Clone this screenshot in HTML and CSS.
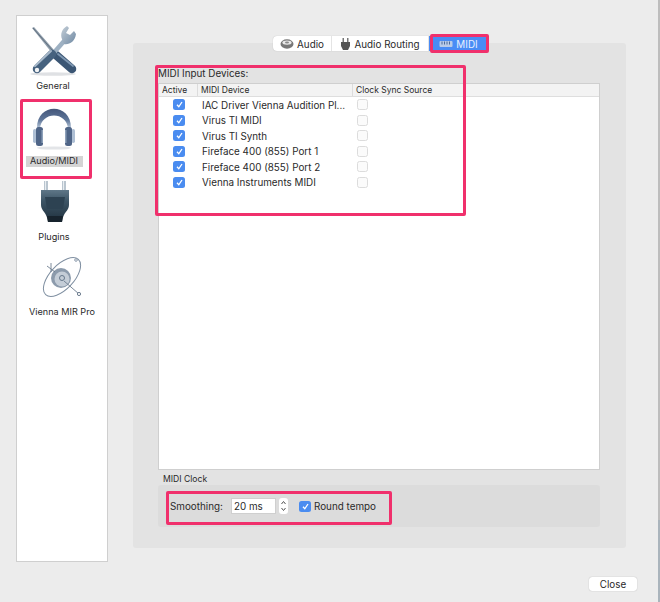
FILE: index.html
```html
<!DOCTYPE html>
<html lang="en">
<head>
<meta charset="utf-8">
<title>Preferences</title>
<link rel="stylesheet" href="styles.css">
</head>
<body>
<div class="window">
  <nav class="sidebar">
    <div class="nav-item nav-general">
      <svg class="nav-icon" width="52" height="52" viewBox="0 0 52 52">
        <defs>
          <linearGradient id="steel" x1="0" y1="0" x2="1" y2="1"><stop offset="0" stop-color="#c4ced7"/><stop offset="1" stop-color="#6f89a3"/></linearGradient>
          <linearGradient id="plug" x1="0" y1="0" x2="0" y2="1"><stop offset="0" stop-color="#5f7788"/><stop offset=".35" stop-color="#3c5465"/><stop offset="1" stop-color="#1f303d"/></linearGradient>
          <linearGradient id="band" x1="0" y1="0" x2="0" y2="1"><stop offset="0" stop-color="#43567a"/><stop offset=".55" stop-color="#5f7699"/><stop offset="1" stop-color="#c0cfe0"/></linearGradient>
        </defs>
        <ellipse cx="26" cy="49" rx="23" ry="1.8" fill="#dfe1e4"/>
        <path d="M5 3 L7 2 L27 25 L25 28Z" fill="#8f9dab"/>
        <path d="M6 3 L26 26" stroke="#4e5d6c" stroke-width=".7"/>
        <path d="M29 30 L45 44" stroke="#3b5674" stroke-width="8.5" stroke-linecap="round"/>
        <path d="M31 29 L46 41" stroke="#7f98b2" stroke-width="1.8" stroke-linecap="round"/>
        <path d="M24 31 L38 15" stroke="#9db0c2" stroke-width="4.5"/>
        <path d="M10 44 L25 29" stroke="#46627f" stroke-width="8.5" stroke-linecap="round"/>
        <path d="M8 41 L24 26" stroke="#a9bacb" stroke-width="2" stroke-linecap="round"/>
        <path d="M40 1 C35 4 33 9 35 14 L37 19 C42 20 48 17 49 9 L47 6 L43 10 L39 8 L42 3Z" fill="url(#steel)"/>
        <circle cx="10" cy="45" r="2.2" fill="#f2f4f6"/>
      </svg>
      <span class="nav-label">General</span>
    </div>
    <div class="nav-item nav-audio">
      <svg class="nav-icon" width="48" height="47" viewBox="0 0 48 47">
        <ellipse cx="24" cy="43" rx="17" ry="1.6" fill="#e3e5e8"/>
        <path d="M7 24 C6 -3 42 -3 41 24 L38 24 C37 6 11 6 10 24Z" fill="url(#band)"/>
        <rect x="3" y="24" width="3.5" height="14" rx="1.7" fill="#aebfd4"/>
        <rect x="41.5" y="24" width="3.5" height="14" rx="1.7" fill="#aebfd4"/>
        <rect x="6" y="22" width="7" height="19" rx="2.5" fill="#4f6587"/>
        <rect x="35" y="22" width="7" height="19" rx="2.5" fill="#4f6587"/>
        <rect x="11.5" y="25" width="1.5" height="13" fill="#8ea1ba"/>
        <rect x="35" y="25" width="1.5" height="13" fill="#8ea1ba"/>
      </svg>
      <span class="nav-label nav-label-selected">Audio/MIDI</span>
    </div>
    <div class="nav-item nav-plugins">
      <svg class="nav-icon" width="30" height="41" viewBox="0 0 30 41">
        <rect x="5" y="0" width="4" height="13" fill="#b9c5cf"/>
        <rect x="6" y="0" width="1" height="13" fill="#e8edf1"/>
        <rect x="23" y="0" width="4" height="13" fill="#b9c5cf"/>
        <rect x="24" y="0" width="1" height="13" fill="#e8edf1"/>
        <path d="M2 9 H30 L30 24 C30 30 24 31 23 41 H9 C8 31 2 30 2 24Z" fill="url(#plug)"/>
        <path d="M6 16 H26 L24 28 H8Z" fill="#2d4252"/>
        <path d="M8 35 H24 L23 41 H9Z" fill="#17232d"/>
      </svg>
      <span class="nav-label">Plugins</span>
    </div>
    <div class="nav-item nav-mir">
      <svg class="nav-icon" width="40" height="42" viewBox="0 0 40 42">
        <ellipse cx="20" cy="20" rx="24" ry="12" transform="rotate(-47 20 20)" fill="none" stroke="#7f8fa1" stroke-width="1"/>
        <circle cx="19" cy="21" r="10" fill="#8c9bac"/>
        <circle cx="20" cy="22" r="7.5" fill="#c4cdd7"/>
        <circle cx="20" cy="21" r="2.5" fill="none" stroke="#66788b"/>
        <path d="M22 24 L37 37 M5 9 L13 15 M9 6 V15" stroke="#6d7d8f" stroke-width=".9"/>
        <circle cx="37" cy="37" r="1.6" fill="#fff" stroke="#6d7d8f"/>
        <circle cx="34" cy="3" r="1.3" fill="#fff" stroke="#8d9cad"/>
      </svg>
      <span class="nav-label">Vienna MIR Pro</span>
    </div>
  </nav>

  <main class="content">
    <div class="tabs">
      <div class="tab tab-audio">
        <svg width="14" height="10" viewBox="0 0 14 10"><ellipse cx="7" cy="5" rx="6.5" ry="4.7" fill="#777"/><ellipse cx="7" cy="3.6" rx="4.6" ry="2.2" fill="#e8e8e8"/><ellipse cx="7" cy="3.6" rx="2" ry="1" fill="#888"/></svg>
        <span>Audio</span>
      </div>
      <div class="tab tab-routing">
        <svg width="11" height="12" viewBox="0 0 11 12"><rect x="2.5" y="0" width="1.5" height="4" fill="#777"/><rect x="7" y="0" width="1.5" height="4" fill="#777"/><path d="M1 4 H10 V8 L8 12 H3 L1 8Z" fill="#555"/></svg>
        <span>Audio Routing</span>
      </div>
      <div class="tab tab-active">
        <svg width="14" height="8" viewBox="0 0 14 8"><rect x="0.5" y="1" width="13" height="6" rx="1" fill="#b9cbe8"/><path d="M3 1.5 V4.5 M5.5 1.5 V4.5 M8 1.5 V4.5 M10.5 1.5 V4.5" stroke="#4d6a98" stroke-width="1"/></svg>
        <span>MIDI</span>
      </div>
    </div>
    <section class="panel">
      <h2 class="panel-title">MIDI Input Devices:</h2>
      <div class="table">
        <div class="row row-head">
          <div class="cell cell-active">Active</div>
          <div class="cell cell-device">MIDI Device</div>
          <div class="cell cell-clock">Clock Sync Source</div>
        </div>
        <div class="row">
          <div class="cell-check"><span class="check"><svg width="9" height="9" viewBox="0 0 9 9"><path d="M2 4.8 L3.8 6.8 L7 2" fill="none" stroke="#fff" stroke-width="1.3"/></svg></span></div>
          <div class="cell-name">IAC Driver Vienna Audition Pl...</div>
          <div class="cell-check2"><span class="check-off"></span></div>
        </div>
        <div class="row">
          <div class="cell-check"><span class="check"><svg width="9" height="9" viewBox="0 0 9 9"><path d="M2 4.8 L3.8 6.8 L7 2" fill="none" stroke="#fff" stroke-width="1.3"/></svg></span></div>
          <div class="cell-name">Virus TI MIDI</div>
          <div class="cell-check2"><span class="check-off"></span></div>
        </div>
        <div class="row">
          <div class="cell-check"><span class="check"><svg width="9" height="9" viewBox="0 0 9 9"><path d="M2 4.8 L3.8 6.8 L7 2" fill="none" stroke="#fff" stroke-width="1.3"/></svg></span></div>
          <div class="cell-name">Virus TI Synth</div>
          <div class="cell-check2"><span class="check-off"></span></div>
        </div>
        <div class="row">
          <div class="cell-check"><span class="check"><svg width="9" height="9" viewBox="0 0 9 9"><path d="M2 4.8 L3.8 6.8 L7 2" fill="none" stroke="#fff" stroke-width="1.3"/></svg></span></div>
          <div class="cell-name">Fireface 400 (855) Port 1</div>
          <div class="cell-check2"><span class="check-off"></span></div>
        </div>
        <div class="row">
          <div class="cell-check"><span class="check"><svg width="9" height="9" viewBox="0 0 9 9"><path d="M2 4.8 L3.8 6.8 L7 2" fill="none" stroke="#fff" stroke-width="1.3"/></svg></span></div>
          <div class="cell-name">Fireface 400 (855) Port 2</div>
          <div class="cell-check2"><span class="check-off"></span></div>
        </div>
        <div class="row">
          <div class="cell-check"><span class="check"><svg width="9" height="9" viewBox="0 0 9 9"><path d="M2 4.8 L3.8 6.8 L7 2" fill="none" stroke="#fff" stroke-width="1.3"/></svg></span></div>
          <div class="cell-name">Vienna Instruments MIDI</div>
          <div class="cell-check2"><span class="check-off"></span></div>
        </div>
      </div>
      <div class="clock-title">MIDI Clock</div>
      <div class="clock-group">
        <span class="smoothing">Smoothing:</span>
        <span class="field">20 ms</span>
        <span class="stepper">
          <svg width="9" height="16" viewBox="0 0 9 16"><path d="M2.5 6 L4.5 3.5 L6.5 6 M2.5 10 L4.5 12.5 L6.5 10" fill="none" stroke="#555" stroke-width="1"/></svg>
        </span>
        <span class="check check-round"><svg width="9" height="9" viewBox="0 0 9 9"><path d="M2 4.8 L3.8 6.8 L7 2" fill="none" stroke="#fff" stroke-width="1.3"/></svg></span>
        <span class="round-label">Round tempo</span>
      </div>
    </section>
    <div class="footer"><button class="close" type="button">Close</button></div>
  </main>

  <div class="mark mark-audio"></div>
  <div class="mark mark-tab"></div>
  <div class="mark mark-inputs"></div>
  <div class="mark mark-clock"></div>
  <div class="edge"></div>
</div>
</body>
</html>
```
FILE: styles.css
```css
* { box-sizing: border-box; }
html, body { margin: 0; padding: 0; }
body {
  background: #ececec;
  font-family: "Inter", "Liberation Sans", sans-serif;
  font-size: 9.85px;
  color: #2a2a2a;
}
.window {
  position: relative;
  width: 660px;
  height: 602px;
  padding: 15px 0 0 16px;
  display: flex;
  overflow: hidden;
}
.sidebar {
  width: 92px;
  height: 547px;
  background: #fff;
  border: 1px solid #cfcfcf;
  display: flex;
  flex-direction: column;
  align-items: flex-start;
  font-size: 9.1px;
}
.nav-item { display: flex; flex-direction: column; align-items: center; width: 74px; }
.nav-icon { display: block; }
.nav-general { padding-top: 9px; width: 72px; }
.nav-audio { margin-top: 13px; }
.nav-plugins { margin-top: 14px; }
.nav-mir { margin-top: 14px; width: 90px; }
.nav-label { display: block; line-height: 13px; margin-top: 2px; white-space: nowrap; }
.nav-plugins .nav-label { margin-top: 8px; }
.nav-mir .nav-label { margin-top: 6px; }
.nav-label-selected {
  background: #d4d4d4;
  width: 57px;
  height: 11px;
  line-height: 10px;
  margin-top: 4px;
  text-align: center;
}
.content {
  width: 493px;
  margin-left: 25px;
  padding-top: 21px;
  display: flex;
  flex-direction: column;
  align-items: stretch;
}
.tabs {
  display: flex;
  align-self: center;
  height: 15px;
  margin: 0 0 -8px 2px;
  background: #fff;
  border-radius: 4px;
  position: relative;
  z-index: 1;
  box-shadow: 0 0 1px rgba(0, 0, 0, .25);
}
.tab {
  display: flex;
  align-items: center;
  justify-content: center;
  gap: 3px;
  border-right: 1px solid #e4e4e4;
}
.tab-audio { width: 59px; }
.tab-routing { width: 97px; }
.tab-active {
  width: 59px;
  background: #4a8cf5;
  color: #e8f0ff;
  border: 0;
  border-radius: 0 4px 4px 0;
}
.panel {
  height: 505px;
  background: #e3e3e3;
  border-radius: 3px;
  padding: 21px 26px 0 25px;
}
.panel-title { margin: 0; font-weight: 400; font-size: 9.85px; line-height: 18px; height: 19px; }
.table {
  height: 387px;
  background: #fff;
  border: 1px solid #cfcfcf;
}
.row { display: grid; grid-template-columns: 38px 155px 1fr; height: 15.5px; align-items: center; }
.row-head {
  height: 13px;
  background: #f3f3f3;
  border-bottom: 1px solid #dedede;
  font-size: 8.5px;
}
.cell { padding-left: 3px; border-left: 1px solid #dcdcdc; line-height: 12px; white-space: nowrap; }
.cell-active { border-left: 0; }
.cell-check { display: flex; justify-content: center; padding-left: 2px; }
.cell-check2 { padding-left: 5px; display: flex; }
.cell-name { padding-left: 5px; white-space: nowrap; }
.check {
  width: 12px;
  height: 11px;
  border-radius: 2.5px;
  background: #4a8cf0;
  display: flex;
  align-items: center;
  justify-content: center;
}
.check-off {
  width: 11px;
  height: 11px;
  border-radius: 2.5px;
  background: #fbfbfb;
  border: 1px solid #dcdcdc;
}
.clock-title { font-size: 8.6px; line-height: 11px; margin-top: 4px; padding-left: 5px; }
.clock-group {
  height: 42px;
  background: #dcdcdc;
  border-radius: 3px;
  display: flex;
  align-items: center;
  padding-left: 12px;
}
.smoothing { width: 61px; }
.field {
  width: 45px;
  height: 16px;
  background: #fff;
  border: 1px solid #cfcfcf;
  padding-left: 2px;
  line-height: 14px;
}
.stepper {
  width: 9px;
  height: 16px;
  margin-left: 3px;
  background: #fff;
  border-radius: 3px;
  display: block;
}
.stepper svg { display: block; }
.check-round { margin-left: 11px; }
.round-label { margin-left: 3px; }
.footer { display: flex; justify-content: flex-end; margin: 29px -11px 0 0; }
.close {
  width: 48px;
  height: 14px;
  padding: 0;
  background: #fff;
  border: 0;
  border-radius: 3px;
  box-shadow: 0 0 1px rgba(0, 0, 0, .35);
  font: 400 9.85px "Inter", "Liberation Sans", sans-serif;
  color: #2a2a2a;
}
.mark { position: absolute; border: 3px solid #f0306c; border-radius: 2px; z-index: 2; }
.mark-audio { left: 20px; top: 99px; width: 72px; height: 80px; }
.mark-tab { left: 430px; top: 34px; width: 59px; height: 19px; }
.mark-inputs { left: 155px; top: 65px; width: 311px; height: 151px; }
.mark-clock { left: 166px; top: 491px; width: 226px; height: 34px; }
.edge {
  position: absolute;
  right: 0;
  top: 0;
  bottom: 0;
  width: 2px;
  background: linear-gradient(#bdbdbd 0, #bdbdbd 520px, #aab4bc 520px, #aab4bc 100%);
}
```
